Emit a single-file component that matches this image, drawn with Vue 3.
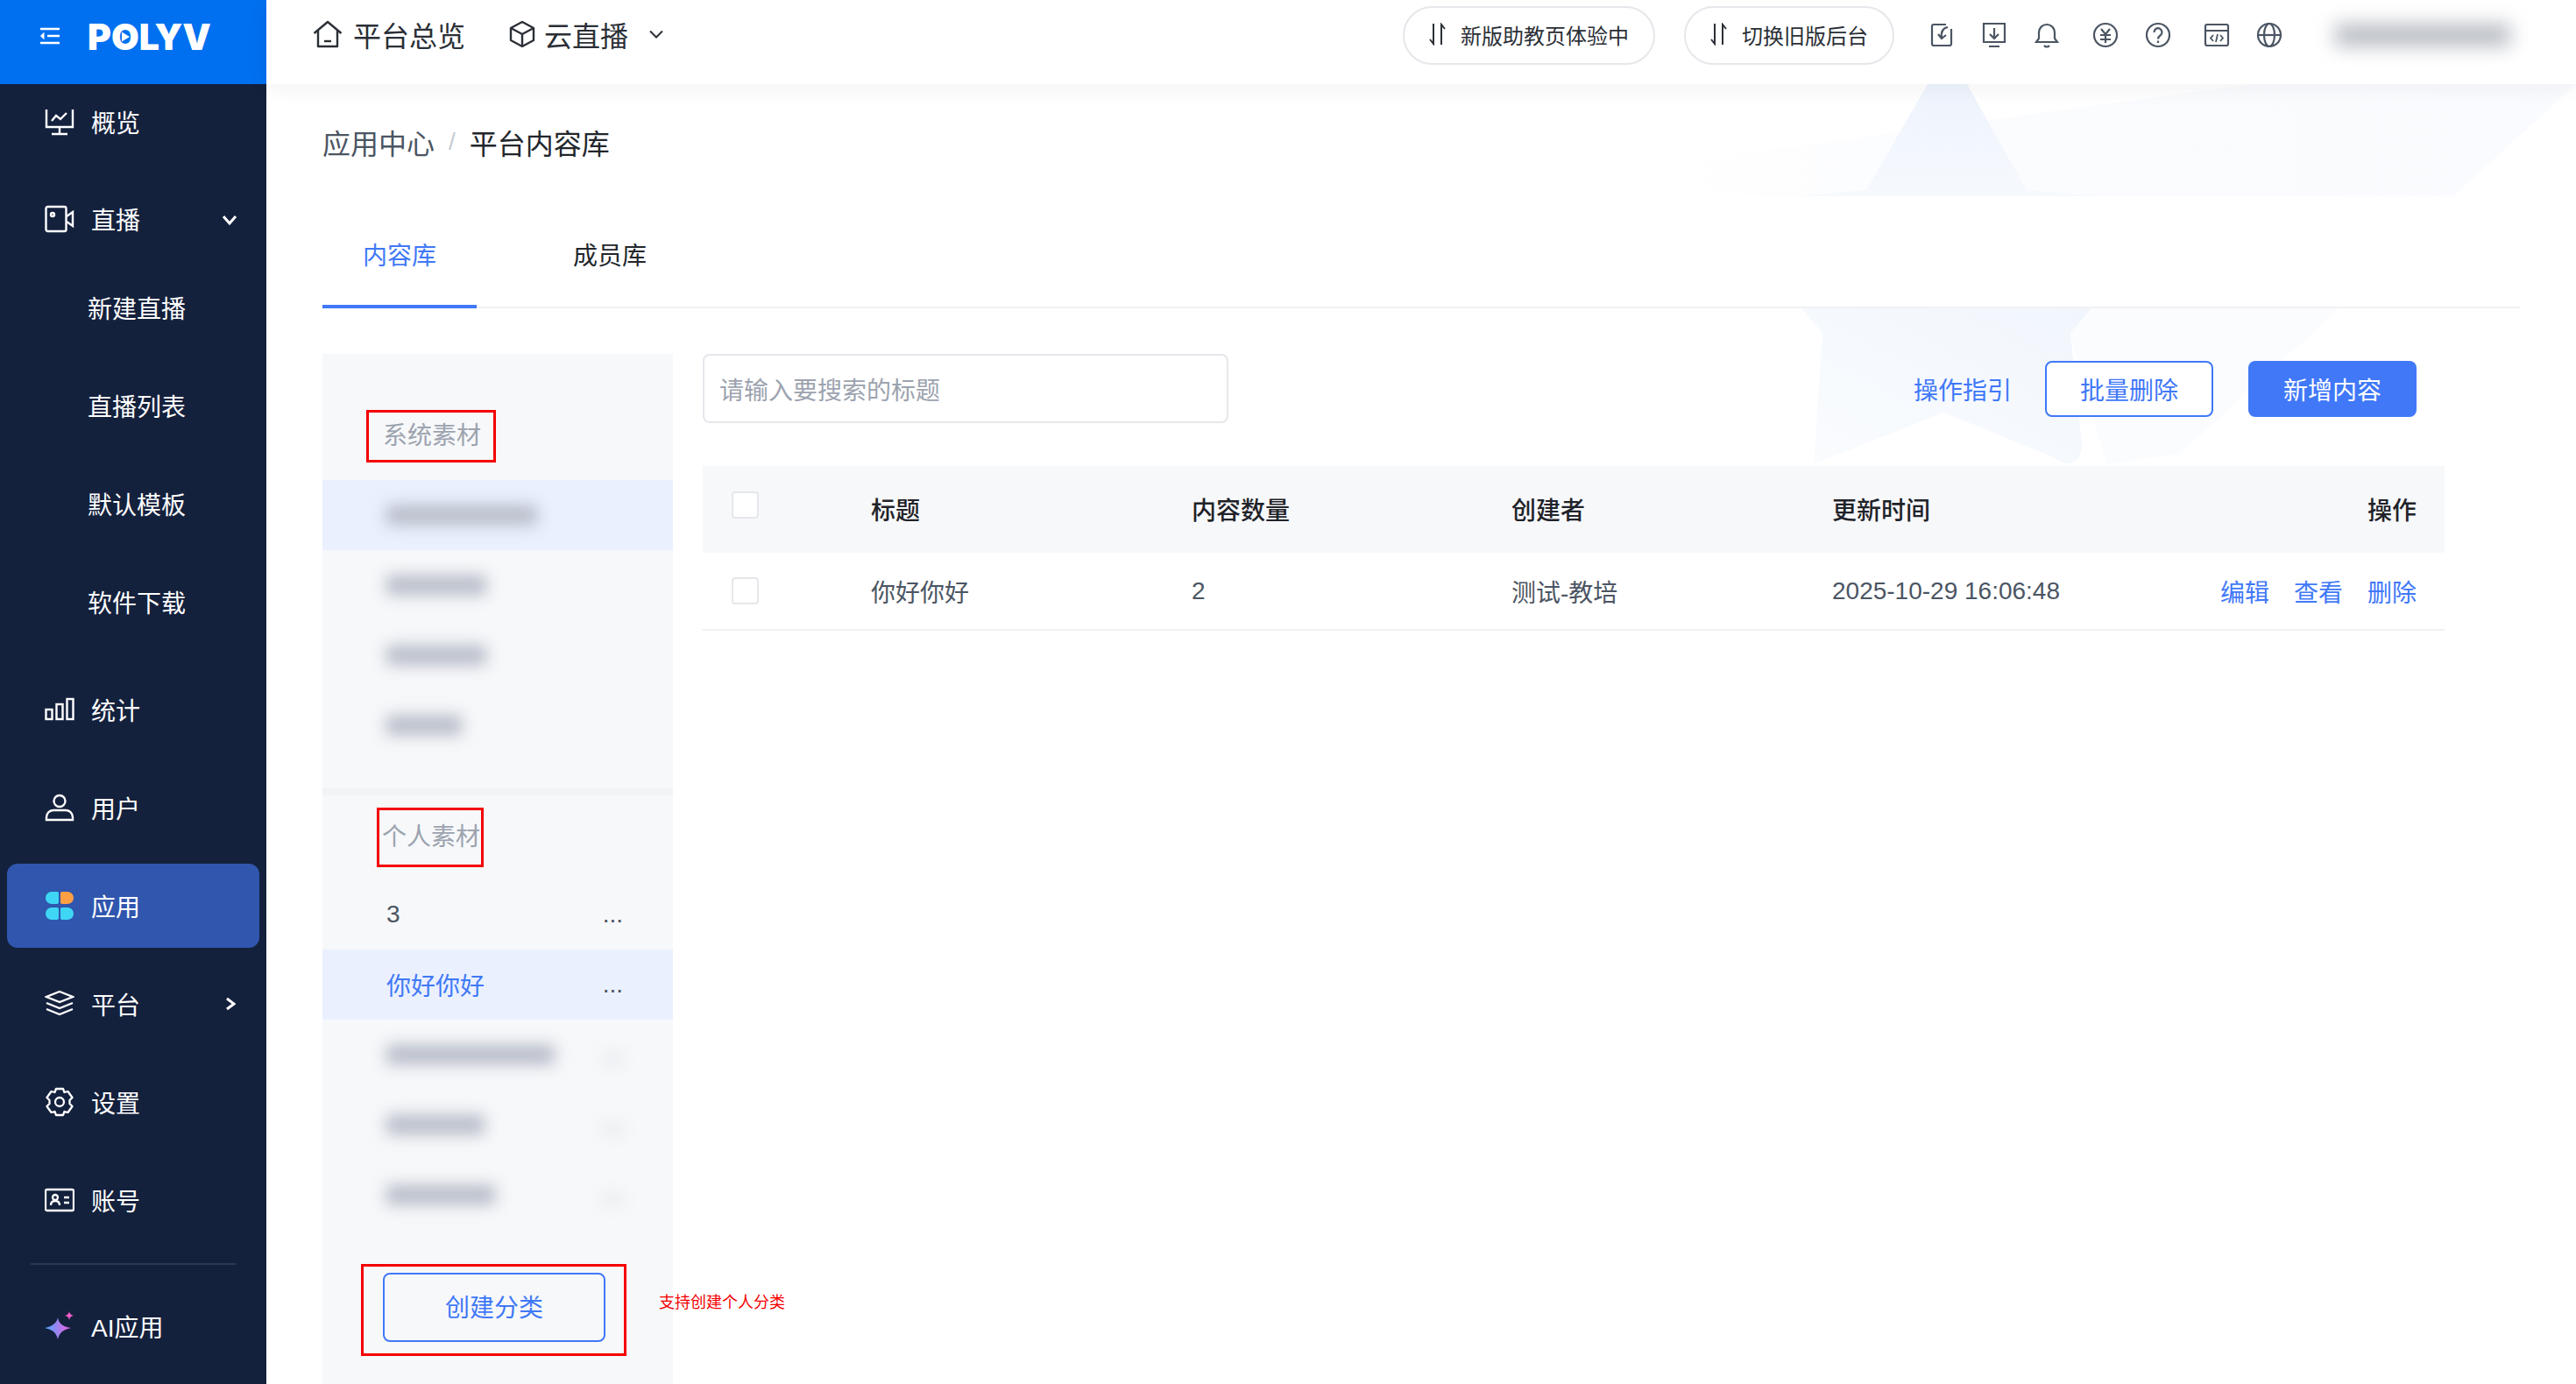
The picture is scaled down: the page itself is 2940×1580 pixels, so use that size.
<script setup>
const subNav = ['新建直播', '直播列表', '默认模板', '软件下载']
const systemRows = [
  { id: 's1', blur: 172, active: true },
  { id: 's2', blur: 114 },
  { id: 's3', blur: 114 },
  { id: 's4', blur: 86 },
]
const personalRows = [
  { id: 'p1', blur: 192 },
  { id: 'p2', blur: 112 },
  { id: 'p3', blur: 124 },
]
const columns = ['标题', '内容数量', '创建者', '更新时间']
</script>

<template>
  <div class="page">
    <aside class="side">
      <div class="brand">
        <svg class="brand__menu" viewBox="0 0 24 20" fill="none" stroke="#fff" stroke-width="2.4">
          <path d="M1 2h22M9 10h14M1 18h22" />
          <path d="M5 6.5 1.5 10 5 13.5z" fill="#fff" stroke-width="1" />
        </svg>
        <div class="brand__logo">
          POLYV
          <svg class="brand__play" viewBox="0 0 10 12"><path d="M0 0 10 6 0 12z" fill="#fff" /></svg>
        </div>
      </div>

      <nav class="nav">
        <a class="nav__item nav__item--first">
          <svg class="nav__icon" viewBox="0 0 34 34" fill="none" stroke="#fff" stroke-width="2.4">
            <path d="M2 3v20h30V3M17 23v7M8 31h18" />
            <path d="M8 16l5-6 5 4 7-7" />
          </svg>
          概览
        </a>
        <a class="nav__item nav__item--open">
          <svg class="nav__icon" viewBox="0 0 34 34" fill="none" stroke="#fff" stroke-width="2.4">
            <rect x="1.5" y="3" width="23" height="28" rx="2" />
            <circle cx="9" cy="12" r="2" />
            <path d="M25 14l7-5v16l-7-5" />
          </svg>
          直播
          <svg class="nav__arrow nav__arrow--down" viewBox="0 0 18 12" fill="none" stroke="#fff" stroke-width="3"><path d="M2 2l7 8 7-8" /></svg>
        </a>
        <a v-for="item in subNav" :key="item" class="nav__sub">{{ item }}</a>
        <a class="nav__item nav__item--gap">
          <svg class="nav__icon" viewBox="0 0 34 34" fill="none" stroke="#fff" stroke-width="2.4">
            <rect x="1.5" y="17" width="7" height="11" />
            <rect x="13.5" y="11" width="7" height="17" />
            <rect x="25.5" y="5" width="7" height="23" />
          </svg>
          统计
        </a>
        <a class="nav__item">
          <svg class="nav__icon" viewBox="0 0 34 34" fill="none" stroke="#fff" stroke-width="2.4">
            <circle cx="17" cy="9.5" r="6.5" />
            <path d="M2 31v-3c0-5 4-8 8-8h14c4 0 8 3 8 8v3z" />
          </svg>
          用户
        </a>
        <a class="nav__item nav__item--active">
          <svg class="nav__icon" viewBox="0 0 34 34">
            <path d="M8 1h6a2 2 0 0 1 2 2v10a2 2 0 0 1-2 2H8A7 7 0 0 1 8 1z" fill="#3fd6f5" />
            <path d="M26 1h-6a2 2 0 0 0-2 2v10a2 2 0 0 0 2 2h6a7 7 0 0 0 0-14z" fill="#ff9f43" />
            <path d="M8 33h6a2 2 0 0 0 2-2V21a2 2 0 0 0-2-2H8a7 7 0 0 0 0 14z" fill="#3fd6f5" />
            <path d="M26 33h-6a2 2 0 0 1-2-2V21a2 2 0 0 1 2-2h6a7 7 0 0 1 0 14z" fill="#3fd6f5" />
          </svg>
          应用
        </a>
        <a class="nav__item">
          <svg class="nav__icon" viewBox="0 0 34 34" fill="none" stroke="#fff" stroke-width="2.2">
            <path d="M17 3 32 9 17 15 2 9z" />
            <path d="M2 16l15 6 15-6M2 23l15 6 15-6" />
          </svg>
          平台
          <svg class="nav__arrow nav__arrow--right" viewBox="0 0 12 16" fill="none" stroke="#fff" stroke-width="3"><path d="M2 2l8 6-8 6" /></svg>
        </a>
        <a class="nav__item">
          <svg class="nav__icon" viewBox="0 0 34 34" fill="none" stroke="#fff" stroke-width="2.3" stroke-linejoin="round">
            <path d="M13 2h8l1.500 4 4-1 5 7-3 3v4l3 3-5 7-4-1-1.500 4h-8l-1.500-4-4 1-5-7 3-3v-4l-3-3 5-7 4 1z" />
            <circle cx="17" cy="17" r="5" />
          </svg>
          设置
        </a>
        <a class="nav__item">
          <svg class="nav__icon" viewBox="0 0 34 34" fill="none" stroke="#fff" stroke-width="2.3">
            <rect x="1" y="5" width="32" height="24" rx="1.5" />
            <circle cx="12" cy="14" r="3" />
            <path d="M7 23c0-3 2-5 5-5s5 2 5 5M22 14h6M22 20h6" />
          </svg>
          账号
        </a>
        <div class="nav__line"></div>
        <a class="nav__item nav__item--ai">
          <svg class="nav__icon" viewBox="0 0 34 34">
            <defs>
              <linearGradient id="aiStar" x1="0" y1="0" x2="1" y2="0">
                <stop offset="0" stop-color="#4aa8ff" />
                <stop offset="1" stop-color="#f45ce0" />
              </linearGradient>
            </defs>
            <path d="M15 7c1 6 4 10 15 12-9 2-13 5-15 13-2-8-6-11-15-13 9-2 14-6 15-12z" fill="url(#aiStar)" />
            <path d="M28 0c.5 3 2 4 5 5-3 .6-4.500 2-5 5-.5-3-2-4.400-5-5 3-1 4.500-2 5-5z" fill="#f45ccb" />
          </svg>
          AI应用
        </a>
      </nav>
    </aside>

    <div class="main">
      <header class="top">
        <a class="top__link">
          <svg class="top__home" viewBox="0 0 34 32" fill="none" stroke="#2b2f36" stroke-width="2.4" stroke-linejoin="round">
            <path d="M1.500 15 17 2l15.500 13M6 12v18h22V12" />
            <path d="M13 24h8" />
          </svg>
          平台总览
        </a>
        <a class="top__link top__link--product">
          <svg class="top__cube" viewBox="0 0 30 32" fill="none" stroke="#2b2f36" stroke-width="2.4" stroke-linejoin="round">
            <path d="M15 2 28 9v14l-13 7-13-7V9z" />
            <path d="M2 9l13 7 13-7M15 16v14" />
          </svg>
          云直播
          <svg class="top__chevron" viewBox="0 0 16 10" fill="none" stroke="#2b2f36" stroke-width="2"><path d="M1 1.500 8 8.500l7-7" /></svg>
        </a>

        <div class="top__right">
          <button class="pill pill--first">
            <svg class="pill__icon" viewBox="0 0 20 26" fill="none" stroke="#2b2f36" stroke-width="2"><path d="M5 1v23L1 19M14 25V2l4 5" /></svg>
            新版助教页体验中
          </button>
          <button class="pill">
            <svg class="pill__icon" viewBox="0 0 20 26" fill="none" stroke="#2b2f36" stroke-width="2"><path d="M5 1v23L1 19M14 25V2l4 5" /></svg>
            切换旧版后台
          </button>

          <div class="tools">
            <svg viewBox="0 0 30 30" fill="none" stroke="#4b5563" stroke-width="2.2">
              <path d="M20 3H6a2 2 0 0 0-2 2v20a2 2 0 0 0 2 2h18a2 2 0 0 0 2-2V8" />
              <path d="M22 6c-5 1-8 5-7 12m-4-4 4 5 5-4" />
            </svg>
            <svg viewBox="0 0 30 30" fill="none" stroke="#4b5563" stroke-width="2.2">
              <path d="M3 2h24v21H3zM15 7v11m-5-4 5 5 5-5M9 28h12" />
            </svg>
            <svg viewBox="0 0 30 30" fill="none" stroke="#4b5563" stroke-width="2.2">
              <path d="M3 23h24l-3-4v-7a9 9 0 0 0-18 0v7zM12 27c1.500 2 4.500 2 6 0" />
            </svg>
            <svg viewBox="0 0 30 30" fill="none" stroke="#4b5563" stroke-width="2.2">
              <circle cx="15" cy="15" r="13" />
              <path d="M10 8l5 6 5-6M9 15h12M9 20h12M15 14v10" />
            </svg>
            <svg viewBox="0 0 30 30" fill="none" stroke="#4b5563" stroke-width="2.2">
              <circle cx="15" cy="15" r="13" />
              <path d="M10.500 12a4.500 4.500 0 1 1 7 3.500c-1.500 1-2.500 2-2.500 4M15 21.500v2.500" />
            </svg>
            <svg viewBox="0 0 30 30" fill="none" stroke="#4b5563" stroke-width="2.2">
              <rect x="2" y="3" width="26" height="24" rx="2" />
              <path d="M2 10h26M11 15l-3 3.500 3 3.500M19 15l3 3.500-3 3.500M16 14l-2 9" stroke-width="1.800" />
            </svg>
            <svg viewBox="0 0 30 30" fill="none" stroke="#4b5563" stroke-width="2.2">
              <circle cx="15" cy="15" r="13" />
              <ellipse cx="15" cy="15" rx="6" ry="13" />
              <path d="M2 15h26" />
            </svg>
          </div>
          <div class="account"></div>
        </div>
      </header>

      <div class="content">
        <svg class="stars" viewBox="0 0 2636 440">
          <defs>
            <linearGradient id="paleBand" x1="0" y1="0" x2="1" y2="0">
              <stop offset="0" stop-color="#fbfcfe" stop-opacity="0" />
              <stop offset="0.35" stop-color="#fbfcfe" />
              <stop offset="1" stop-color="#fafbfe" />
            </linearGradient>
            <linearGradient id="starTop" x1="0" y1="0" x2="0" y2="1">
              <stop offset="0" stop-color="#eef4fd" />
              <stop offset="1" stop-color="#f6f9fe" />
            </linearGradient>
            <linearGradient id="starLow" x1="1" y1="0" x2="0" y2="1">
              <stop offset="0" stop-color="#f1f6fd" />
              <stop offset="1" stop-color="#fafcfe" />
            </linearGradient>
          </defs>
          <path d="M1576 94 2266 0H2636L2496 128H1576z" fill="url(#paleBand)" />
          <path d="M1896 0H1941L2009 121 2091 128H1746L1826 121z" fill="url(#starTop)" />
          <path d="M2083 256H2366L2184 422 2100 434 2059 284z" fill="#fbfcfe" />
          <path d="M1752 256H2083L2059 284 2072 410C2072 436 2056 438 2040 426L1914 375 1766 434 1776 284z" fill="url(#starLow)" />
        </svg>

        <div class="crumb">
          <span class="crumb__parent">应用中心</span>
          <span class="crumb__sep">/</span>
          <span class="crumb__current">平台内容库</span>
        </div>

        <div class="tabs">
          <a class="tabs__item tabs__item--on">内容库</a>
          <a class="tabs__item">成员库</a>
        </div>

        <div class="body">
          <section class="cats">
            <div class="cats__title cats__title--system">系统素材</div>
            <div
              v-for="row in systemRows"
              :key="row.id"
              class="cats__row"
              :class="{ 'cats__row--on': row.active }"
            >
              <span class="smudge" :style="{ width: row.blur + 'px' }"></span>
            </div>
            <div class="cats__split"></div>

            <div class="cats__title cats__title--own">个人素材</div>
            <div class="cats__row">
              <span class="cats__name">3</span>
              <span class="cats__more">...</span>
            </div>
            <div class="cats__row cats__row--on">
              <span class="cats__name">你好你好</span>
              <span class="cats__more">...</span>
            </div>
            <div v-for="row in personalRows" :key="row.id" class="cats__row">
              <span class="smudge" :style="{ width: row.blur + 'px' }"></span>
              <span class="smudge smudge--more"></span>
            </div>

            <div class="cats__create">
              <button class="btn btn--line btn--create">创建分类</button>
              <span class="cats__note">支持创建个人分类</span>
            </div>
          </section>

          <section class="list">
            <div class="bar">
              <div class="search">请输入要搜索的标题</div>
              <div class="bar__actions">
                <a class="link">操作指引</a>
                <button class="btn btn--line">批量删除</button>
                <button class="btn btn--fill">新增内容</button>
              </div>
            </div>

            <div class="grid grid--head">
              <div class="grid__check grid__check--head"><i class="check"></i></div>
              <div v-for="col in columns" :key="col">{{ col }}</div>
              <div class="grid__ops">操作</div>
            </div>
            <div class="grid grid--row">
              <div class="grid__check"><i class="check"></i></div>
              <div>你好你好</div>
              <div>2</div>
              <div>测试-教培</div>
              <div>2025-10-29 16:06:48</div>
              <div class="grid__ops">
                <a class="link">编辑</a>
                <a class="link">查看</a>
                <a class="link">删除</a>
              </div>
            </div>
          </section>
        </div>
      </div>
    </div>
  </div>
</template>

<style>
html,
body {
  margin: 0;
  background: #fff;
}
</style>

<style scoped>
.page {
  display: flex;
  width: 2940px;
  height: 1580px;
  overflow: hidden;
  font-family: 'Liberation Sans', 'Noto Sans CJK SC', sans-serif;
  font-size: 28px;
  color: #4b5563;
  background: #fff;
}

.side {
  flex: none;
  width: 304px;
  background: #14213d;
  color: #fff;
}

.brand {
  display: flex;
  align-items: flex-start;
  height: 96px;
  padding: 31px 0 0 45px;
  box-sizing: border-box;
  background: #0070f0;
}

.brand__menu {
  width: 24px;
  height: 20px;
}

.brand__logo {
  position: relative;
  margin: -14px 0 0 31px;
  font-family: Inter, sans-serif;
  font-size: 41px;
  font-weight: 900;
  line-height: 50px;
}

.brand__play {
  position: absolute;
  left: 39px;
  top: 19px;
  width: 9px;
  height: 12px;
}

.nav {
  display: flex;
  flex-direction: column;
}

.nav__item {
  display: flex;
  align-items: center;
  flex: none;
  position: relative;
  height: 96px;
  margin: 0 8px 16px;
  padding-left: 43px;
  border-radius: 12px;
}

.nav__item--first {
  height: 86px;
  margin-bottom: 20px;
}

.nav__item--open {
  margin-bottom: 0;
}

.nav__item--active {
  background: #3056ae;
}

.nav__item--ai {
  margin-top: 22px;
}

.nav__icon {
  flex: none;
  width: 34px;
  height: 34px;
  margin-right: 19px;
}

.nav__arrow {
  position: absolute;
}

.nav__arrow--down {
  left: 245px;
  top: 43px;
  width: 18px;
  height: 12px;
}

.nav__arrow--right {
  left: 249px;
  top: 40px;
  width: 12px;
  height: 16px;
}

.nav__sub {
  flex: none;
  height: 112px;
  padding-left: 100px;
  line-height: 112px;
}

.nav__item--gap {
  margin-top: 16px;
}

.nav__line {
  flex: none;
  height: 2px;
  margin: 8px 35px 0;
  background: #2b3853;
}

.main {
  flex: 1;
  min-width: 0;
  display: flex;
  flex-direction: column;
}

.top {
  position: relative;
  z-index: 2;
  display: flex;
  align-items: flex-start;
  flex: none;
  height: 96px;
  padding-left: 53px;
  box-sizing: border-box;
  background: #fff;
  box-shadow: 0 4px 24px rgba(31, 41, 55, 0.06);
  color: #2b2f36;
}

.top__link {
  display: flex;
  align-items: center;
  height: 78px;
  font-size: 32px;
}

.top__link--product {
  margin-left: 50px;
}

.top__home {
  width: 34px;
  height: 32px;
  margin-right: 12px;
}

.top__cube {
  width: 30px;
  height: 32px;
  margin-right: 10px;
}

.top__chevron {
  width: 16px;
  height: 10px;
  margin-left: 24px;
}

.top__right {
  display: flex;
  align-items: center;
  height: 80px;
  margin-left: auto;
}

.pill {
  display: flex;
  align-items: center;
  justify-content: center;
  height: 67px;
  padding: 0 28px 2px;
  margin-right: 33px;
  border: 2px solid #e5e7eb;
  border-radius: 34px;
  background: #fff;
  font: inherit;
  font-size: 24px;
  color: #2b2f36;
}

.pill__icon {
  width: 20px;
  height: 26px;
  margin-right: 16px;
}

.tools {
  display: flex;
  margin-left: 6px;
}

.tools svg {
  width: 30px;
  height: 30px;
  margin-right: 30px;
}

.tools svg:nth-child(3) {
  margin-right: 37px;
}

.tools svg:nth-child(5) {
  margin-right: 37px;
}

.account {
  width: 200px;
  height: 24px;
  margin: 0 75px 0 30px;
  background: #b4b8c0;
  filter: blur(11px);
}

.content {
  position: relative;
  flex: 1;
  min-height: 0;
  padding: 0 64px;
}

.stars {
  position: absolute;
  left: 0;
  top: 0;
  width: 2636px;
  height: 440px;
}

.crumb {
  position: relative;
  display: flex;
  align-items: center;
  height: 128px;
  padding-top: 4px;
  box-sizing: border-box;
  font-size: 32px;
}

.crumb__parent {
  color: #4b5563;
}

.crumb__sep {
  margin: 0 16px;
  color: #c6cbd3;
  font-size: 28px;
}

.crumb__current {
  color: #22262c;
}

.tabs {
  position: relative;
  display: flex;
  height: 128px;
  margin: 0 -64px;
  padding: 0 64px;
  background: #fff;
}

.tabs::after {
  content: '';
  position: absolute;
  left: 64px;
  right: 64px;
  bottom: 0;
  height: 2px;
  background: #eff1f4;
}

.tabs__item {
  position: relative;
  z-index: 1;
  width: 176px;
  margin-right: 64px;
  box-sizing: border-box;
  padding-top: 48px;
  text-align: center;
  line-height: 42px;
  color: #22262c;
}

.tabs__item--on {
  border-bottom: 4px solid #4078f8;
  color: #4078f8;
}

.body {
  position: relative;
  display: flex;
  gap: 34px;
  height: 1176px;
  margin-top: 52px;
  margin-right: 86px;
}

.cats {
  flex: none;
  width: 400px;
  padding-top: 64px;
  box-sizing: border-box;
  background: #f7f8fa;
}

.cats__title {
  display: flex;
  align-items: center;
  border: 3px solid #f40000;
  box-sizing: border-box;
  color: #9ca3af;
}

.cats__title--system {
  width: 148px;
  height: 60px;
  margin: 0 0 20px 50px;
  padding: 0 0 6px 16px;
}

.cats__title--own {
  width: 122px;
  height: 68px;
  margin: 14px 0 14px 62px;
  padding: 0 0 6px 3px;
  white-space: nowrap;
}

.cats__row {
  display: flex;
  align-items: center;
  justify-content: space-between;
  height: 80px;
  padding: 0 57px 0 73px;
}

.cats__row--on {
  background: #eaf0fe;
}

.cats__row--on .cats__name {
  color: #4078f8;
}

.cats__more {
  color: #4b5563;
}

.smudge {
  height: 22px;
  background: #b5bac6;
  filter: blur(9px);
}

.smudge--more {
  width: 22px;
  height: 12px;
  margin-top: 10px;
  background: #e6e8ec;
}

.cats__split {
  height: 8px;
  margin-top: 32px;
  background: #f2f3f5;
}

.cats__create {
  position: relative;
  width: 303px;
  height: 105px;
  margin: 39px 0 0 44px;
  padding: 7px 0 0 22px;
  box-sizing: border-box;
  border: 3px solid #f40000;
}

.cats__note {
  position: absolute;
  left: 337px;
  top: 27px;
  font-size: 18px;
  line-height: 28px;
  color: #f40000;
  white-space: nowrap;
}

.btn {
  height: 64px;
  width: 192px;
  border-radius: 8px;
  box-sizing: border-box;
  font: inherit;
}

.btn--line {
  border: 2px solid #4078f8;
  background: #fff;
  color: #4078f8;
}

.btn--fill {
  border: 0;
  background: #4078f8;
  color: #fff;
}

.btn--create {
  width: 254px;
  height: 79px;
  padding-bottom: 4px;
  background: transparent;
}

.list {
  flex: 1;
  min-width: 0;
}

.bar {
  display: flex;
  align-items: flex-start;
  justify-content: space-between;
  height: 128px;
  padding-right: 32px;
}

.search {
  display: flex;
  align-items: center;
  width: 600px;
  height: 79px;
  padding-left: 17px;
  box-sizing: border-box;
  border: 2px solid #e5e7eb;
  border-radius: 8px;
  background: #fff;
  color: #9ca3af;
}

.bar__actions {
  display: flex;
  align-items: center;
  gap: 40px;
  height: 64px;
  margin-top: 8px;
}

.bar__actions .link {
  margin-right: -2px;
}

.link {
  color: #4078f8;
}

.grid {
  display: grid;
  grid-template-columns: 192px 366px 365px 366px 400px 1fr;
  align-items: center;
  position: relative;
}

.grid--head {
  height: 99px;
  padding-bottom: 2px;
  background: #f7f8fa;
  color: #1f2329;
  font-weight: 500;
  box-sizing: border-box;
}

.grid--row {
  height: 89px;
  border-bottom: 2px solid #f0f1f3;
  box-sizing: border-box;
}

.grid__check {
  display: flex;
  padding-left: 33px;
}

.grid__check--head {
  margin-top: -8px;
}

.check {
  width: 31px;
  height: 31px;
  box-sizing: border-box;
  border: 2px solid #e5e7eb;
  border-radius: 4px;
  background: #fff;
}

.grid__ops {
  display: flex;
  justify-content: flex-end;
  gap: 28px;
  padding-right: 32px;
}
</style>
